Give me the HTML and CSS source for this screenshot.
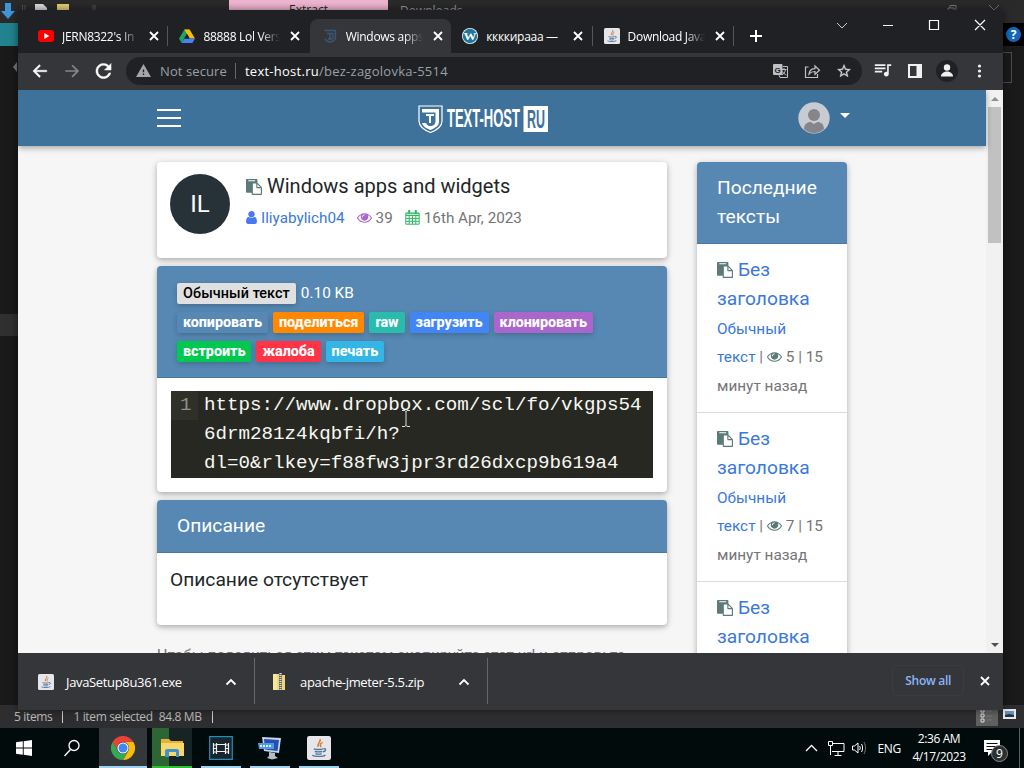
FILE: index.html
```html
<!DOCTYPE html>
<html lang="ru">
  <head>
    <meta charset="UTF-8">
    <title>Windows apps and widgets</title>
    <link rel="stylesheet" href="styles.css">
  </head>
  <body>
    <svg class="defs" width="0" height="0">
      <symbol id="paste" viewBox="0 0 1792 1792"><path d="M768 1664h896v-640h-416q-40 0-68-28t-28-68v-416h-384v1152zm256-1440v-64q0-13-9.5-22.5t-22.5-9.5h-704q-13 0-22.5 9.5t-9.5 22.5v64q0 13 9.5 22.5t22.5 9.5h704q13 0 22.5-9.5t9.5-22.5zm256 672h299l-299-299v299zm512 128v672q0 40-28 68t-68 28h-960q-40 0-68-28t-28-68v-160h-544q-40 0-68-28t-28-68v-1344q0-40 28-68t68-28h1088q40 0 68 28t28 68v328q21 13 36 28l408 408q28 28 48 76t20 88z"/></symbol>
      <symbol id="eye" viewBox="0 0 1792 1792"><path d="M1664 960q-152-236-381-353 61 104 61 225 0 185-131.5 316.5t-316.5 131.5-316.5-131.5-131.5-316.5q0-121 61-225-229 117-381 353 133 205 333.5 326.5t434.5 121.5 434.5-121.5 333.5-326.5zm-720-384q0-20-14-34t-34-14q-125 0-214.5 89.5t-89.5 214.5q0 20 14 34t34 14 34-14 14-34q0-86 61-147t147-61q20 0 34-14t14-34zm848 384q0 34-20 69-140 230-376.5 368.5t-499.5 138.5-499.5-139-376.5-368q-20-35-20-69t20-69q140-229 376.5-368t499.5-139 499.5 139 376.5 368q20 35 20 69z"/></symbol>
      <symbol id="user" viewBox="256 128 1280 1536"><path d="M1536 1399q0 109-62.5 187t-150.5 78h-854q-88 0-150.5-78t-62.5-187q0-85 8.5-160.5t31.5-152 58.5-131 94-89 134.5-34.5q131 128 313 128t313-128q76 0 134.5 34.5t94 89 58.5 131 31.5 152 8.5 160.5zm-256-887q0 159-112.5 271.5t-271.5 112.5-271.5-112.5-112.5-271.5 112.5-271.5 271.5-112.5 271.5 112.5 112.5 271.5z"/></symbol>
      <symbol id="close" viewBox="0 0 10 10"><path d="M1 1l8 8M9 1l-8 8" fill="none" stroke="currentColor" stroke-width="1.8"/></symbol>
      <symbol id="up" viewBox="0 0 12 8"><path d="M1.5 6.5L6 2l4.5 4.5" fill="none" stroke="currentColor" stroke-width="1.8"/></symbol>
      <symbol id="java" viewBox="0 0 16 16">
        <rect width="16" height="16" rx="1.5" fill="#e4e6ea"/>
        <path d="M8.7 2c1 2-2.4 3-1.2 5.2M10.4 4.2c-1.6.8-2 1.7-1 3.2" fill="none" stroke="#e0762f" stroke-width="1"/>
        <path d="M4.5 8.5c1 .7 5 .7 6.2 0M11 8.5c2-.4 1.8 1.7-.3 2M5.2 10.2c1 .5 4 .5 5 0M5.6 11.7c1 .4 3.200.4 4.200 0M3.500 12.800c1.500 1.200 7.500 1 8.800-.2" fill="none" stroke="#52759b" stroke-width=".9"/>
      </symbol>
    </svg>

    <div class="desktop">
      <!-- file explorer behind the browser -->
      <div class="explorer">
        <svg class="ribbon-icons" width="100" height="24" viewBox="0 0 100 24">
          <path d="M5 3h6v8h4l-7 8-7-8h4z" fill="#3d96dc"/>
          <path d="M22.500 5v5M25 5v5M93 5v5M95 5v5" stroke="#555"/>
          <path d="M35 4h8l4 4v2H35z" fill="#dcdcdc"/>
          <path d="M57 4h12v6H57z" fill="#e3ce74"/>
        </svg>
        <div class="ribbon-tab">Extract</div>
        <div class="folder-name">Downloads</div>
        <svg class="explorer-buttons" width="60" height="14" viewBox="0 0 60 14" fill="none" stroke="#777"><path d="M4 12V8h6v4M6 8V5.500h6V10M45 5l5 5 5-5"/></svg>
        <div class="file-tab"></div>
        <svg class="back-arrow" width="6" height="12" viewBox="0 0 6 12"><path d="M5 1L1 6l4 5z" fill="#777"/></svg>
        <div class="scroll-piece"></div>
        <div class="help"><span>?</span></div>
        <div class="search-box"></div>
        <div class="status">
          <span>5 items</span><i></i><span>1 item selected</span><span>84.8 MB</span><i></i>
          <svg class="views" width="44" height="18" viewBox="0 0 44 18">
            <rect x="0" y="0" width="22" height="18" fill="#606060"/>
            <path d="M5 1h3v3H5zM5 6h3v3H5zM5 11h3v3H5z" fill="none" stroke="#ddd"/>
            <path d="M10 3h6M10 8h6M10 12h6" stroke="#777"/>
            <rect x="27" y="1" width="13" height="10" fill="#e8e8e8"/><rect x="29" y="3" width="9" height="6" fill="#6a8fb5"/><path d="M29 7l4-1 5 1v2h-9z" fill="#234"/>
          </svg>
        </div>
      </div>

      <div class="browser">
        <div class="tabs">
          <div class="tab">
            <svg width="16" height="16" viewBox="0 0 16 16"><rect y="2" width="16" height="12" rx="3" fill="#f00"/><path d="M6.300 5l5 3-5 3z" fill="#fff"/></svg>
            <span>JERN8322's In</span>
            <svg class="x"><use href="#close"/></svg>
          </div>
          <div class="tab">
            <svg width="16" height="16" viewBox="0 0 16 16"><path d="M5.400 1.500h5.200L5.300 10.300 2.600 15 0 10.500z" fill="#1ea362"/><path d="M5.400 1.500h5.200l5.400 9h-5.300z" fill="#fbbc05"/><path d="M5.300 10.500H16L13.400 15H2.600z" fill="#4285f4"/><path d="M8 6l-2.600 4.500h5.200z" fill="#202124"/></svg>
            <span>88888 Lol Vers</span>
            <svg class="x"><use href="#close"/></svg>
          </div>
          <div class="tab active">
            <svg width="16" height="16" viewBox="0 0 16 16" fill="none" stroke="#3a5875" stroke-width="1.400"><path d="M2.500 2.500h11V9c0 3-2.500 4.500-5.500 5-3-.5-4.500-2-5-3.500M5 5.500h6M8 5.500v5M11 5v4c0 2-3 3-5 1.500"/></svg>
            <span>Windows apps</span>
            <svg class="x"><use href="#close"/></svg>
          </div>
          <div class="tab">
            <svg width="16" height="16" viewBox="0 0 16 16"><circle cx="8" cy="8" r="8" fill="#e8f3f7"/><circle cx="8" cy="8" r="7.200" fill="#21759b"/><text x="8" y="12" text-anchor="middle" textLength="13" lengthAdjust="spacingAndGlyphs" class="wp">W</text></svg>
            <span class="full">ккккирааа —</span>
            <svg class="x"><use href="#close"/></svg>
          </div>
          <div class="tab">
            <svg width="16" height="16"><use href="#java"/></svg>
            <span>Download Java</span>
            <svg class="x"><use href="#close"/></svg>
          </div>
          <svg class="new-tab" width="12" height="12" viewBox="0 0 12 12"><path d="M6 0v12M0 6h12" stroke="#fff" stroke-width="2"/></svg>
          <svg class="window-buttons" width="160" height="14" viewBox="0 0 160 14" fill="none" stroke="#fff"><path d="M7 5l5 5 5-5" stroke="#ccc"/><path d="M53 7.500h10M99.500 2.500h9v9h-9zM145 2l10 10M155 2l-10 10" stroke-width="1.200"/></svg>
        </div>

        <div class="toolbar">
          <svg class="nav" viewBox="0 0 24 24"><path d="M21 11H6.800l5.900-5.900L11 3.500 2.500 12l8.500 8.500 1.700-1.600L6.800 13H21z" stroke="#fff" stroke-width=".6" fill="#fff"/></svg>
          <svg class="nav" viewBox="0 0 24 24"><path d="M3 11h14.200l-5.900-5.900L13 3.500l8.500 8.500-8.500 8.500-1.700-1.600 5.900-5.900H3z" fill="#85868a"/></svg>
          <svg class="nav reload" viewBox="3 3 18 18"><path d="M17.650 6.350C16.200 4.900 14.210 4 12 4c-4.420 0-7.990 3.580-7.990 8s3.570 8 7.990 8c3.730 0 6.840-2.550 7.730-6h-2.080c-.82 2.330-3.040 4-5.650 4-3.310 0-6-2.690-6-6s2.690-6 6-6c1.660 0 3.140.69 4.220 1.780L13 11h7V4l-2.350 2.350z" fill="#fff" stroke="#fff" stroke-width=".5"/></svg>
          <div class="address">
            <svg width="15" height="15" viewBox="1 1 22 21"><path d="M1 21h22L12 2 1 21zm12-3h-2v-2h2v2zm0-4h-2v-4h2v4z" fill="#a5a6a9"/></svg>
            <span class="secure">Not secure</span>
            <span class="url"><b>text-host.ru</b>/bez-zagolovka-5514</span>
            <svg class="page-actions" width="80" height="18" viewBox="0 0 80 18">
              <rect x="1" y="2" width="9.500" height="11" rx="1" fill="#bfc0c3"/><text x="5.700" y="10.500" text-anchor="middle" class="gt">G</text>
              <path d="M11 4.500h4.500v11H8L7 13M9.500 7.500h5M12 6v1.500M13.500 7.500c-.5 3-2 4.500-3.500 5.500M10.500 9.500c1 2 2.500 3 4 3.500" fill="none" stroke="#bfc0c3"/>
              <path d="M36.500 5h-3v10.500h12V12M37 12c.5-3.500 3-5.300 6-5.300V4l4.500 4.300L43 12.300V9.500c-2.500 0-4.500.7-6 2.500z" fill="none" stroke="#bfc0c3" stroke-width="1.200"/>
              <path transform="translate(64 1) scale(.67)" d="M22 9.240l-7.190-.62L12 2 9.190 8.630 2 9.240l5.460 4.730L5.820 21 12 17.270 18.180 21l-1.630-7.030L22 9.240zM12 15.400l-3.760 2.270 1-4.280-3.320-2.880 4.380-.38L12 6.100l1.710 4.040 4.380.38-3.320 2.880 1 4.280L12 15.400z" fill="#d4d5d7" stroke="#d4d5d7" stroke-width=".4"/>
            </svg>
          </div>
          <svg class="tools" width="120" height="24" viewBox="0 0 120 24" fill="#f1f1f1">
            <path transform="translate(3 2) scale(.82)" d="M14 4H1v2h13V4zm0 4H1v2h13V8zM1 14h9v-2H1v2zM16 4v9.200c-.3-.1-.7-.2-1-.2-1.700 0-3 1.300-3 3s1.300 3 3 3 3-1.300 3-3V6h3V4h-5z"/>
            <path d="M37 5h14v14H37zM39 7v10h6.500V7z" fill-rule="evenodd"/>
            <circle cx="76" cy="12" r="11" fill="#202124"/><circle cx="76" cy="8.500" r="3.200"/><path d="M70 17.500c0-3.500 3.500-5 6-5s6 1.500 6 5z"/>
            <circle cx="108.500" cy="7" r="1.600"/><circle cx="108.500" cy="12" r="1.600"/><circle cx="108.500" cy="17" r="1.600"/>
          </svg>
        </div>

        <div class="viewport">
          <div class="page">
            <div class="navbar">
              <svg width="24" height="20" viewBox="0 0 24 20"><path d="M0 2h24M0 10h24M0 18h24" stroke="#fff" stroke-width="1.800"/></svg>
              <svg class="logo" width="131" height="30" viewBox="0 0 131 30">
                <path d="M1 2h23v15c0 6-5 9-11.500 11.500C6 26 1 23 1 17z" fill="none" stroke="#fff" stroke-width="1.200"/>
                <path d="M4 5h17v12.500c0 4.500-4 6.500-8.500 8.500C9 24.500 5 23 4 19h4c1 2.500 3 3 4.500 3 3 0 5-2 5-5V8.500H4z" fill="#fff"/>
                <path d="M8 11h8M12 11v8" stroke="#fff" stroke-width="2"/>
                <text x="29" y="23" textLength="73" lengthAdjust="spacingAndGlyphs">TEXT-HOST</text>
                <path d="M105.500 2H130v26h-24.500z" fill="#fff"/>
                <text class="ru" x="109" y="23.500" textLength="18" lengthAdjust="spacingAndGlyphs">RU</text>
              </svg>
              <div class="account">
                <svg width="32" height="32" viewBox="0 0 32 32"><circle cx="16" cy="16" r="15.700" fill="#c8cbd2"/><circle cx="16" cy="13" r="6" fill="#85868c"/><path d="M6 27c.3-5 3-7 6.500-7l3.500 2 3.500-2c3.500 0 6.200 2 6.500 7-5 5.500-15 5.500-20 0z" fill="#85868c"/></svg>
                <i class="caret"></i>
              </div>
            </div>

            <div class="content">
              <div class="main">
                <div class="card info">
                  <div class="avatar">IL</div>
                  <div>
                    <h1><svg class="paste"><use href="#paste"/></svg>Windows apps and widgets</h1>
                    <div class="meta">
                      <a><svg class="user"><use href="#user"/></svg>Iliyabylich04</a>
                      <span><svg class="eye"><use href="#eye"/></svg>39</span>
                      <span><svg class="cal" viewBox="0 0 15 15" fill="none" stroke="#2fb765"><path d="M.8 3h13.400v11.200H.8zM.8 5.500h13.400M.8 8.400h13.400M.8 11.300h13.400M4.200 5v9M7.500 5v9M10.800 5v9M1 3.800h13"/><path d="M4.200 0v3.500M10.800 0v3.500" stroke-width="2"/></svg>16th Apr, 2023</span>
                    </div>
                  </div>
                </div>

                <div class="card text">
                  <div class="card-header">
                    <div class="line"><span class="badge light">Обычный текст</span> <span class="size">0.10 KB</span></div>
                    <div class="line">
                      <span class="badge copy">копировать</span>
                      <span class="badge share">поделиться</span>
                      <span class="badge raw">raw</span>
                      <span class="badge download">загрузить</span>
                      <span class="badge clone">клонировать</span>
                    </div>
                    <div class="line">
                      <span class="badge embed">встроить</span>
                      <span class="badge report">жалоба</span>
                      <span class="badge print">печать</span>
                    </div>
                  </div>
                  <div class="code">
                    <div class="gutter">1</div>
                    <div class="source">https://www.dropbox.com/scl/fo/vkgps54<br>6drm281z4kqbfi/h?<br>dl=0&amp;rlkey=f88fw3jpr3rd26dxcp9b619a4</div>
                  </div>
                </div>

                <div class="card description">
                  <div class="card-header">Описание</div>
                  <p>Описание отсутствует</p>
                </div>
                <p class="hint">Чтобы поделиться этим текстом скопируйте этот url и отправьте</p>
              </div>

              <div class="card sidebar">
                <div class="card-header">Последние тексты</div>
                <div class="item">
                  <a><svg class="paste"><use href="#paste"/></svg>Без<br>заголовка</a>
                  <small><a>Обычный<br>текст</a> | <svg class="eye"><use href="#eye"/></svg> 5 | 15<br>минут назад</small>
                </div>
                <div class="item">
                  <a><svg class="paste"><use href="#paste"/></svg>Без<br>заголовка</a>
                  <small><a>Обычный<br>текст</a> | <svg class="eye"><use href="#eye"/></svg> 7 | 15<br>минут назад</small>
                </div>
                <div class="item">
                  <a><svg class="paste"><use href="#paste"/></svg>Без<br>заголовка</a>
                </div>
              </div>
            </div>
          </div>
          <div class="scrollbar"><i class="arrow-up"></i><div class="thumb"></div><i class="arrow-down"></i></div>
        </div>

        <div class="downloads">
          <div class="file">
            <svg width="16" height="16"><use href="#java"/></svg>
            <span>JavaSetup8u361.exe</span>
            <svg class="up"><use href="#up"/></svg>
          </div>
          <div class="file zip">
            <svg width="16" height="17" viewBox="0 0 16 17"><path d="M1 1h6l1 1h5v15H1z" fill="#f0d775"/><path d="M1 1h4v16H1z" fill="#f7e79a"/><path d="M7 0h3v17H7z" fill="#666"/><path d="M8.500 0v17" stroke="#ddd" stroke-width="2" stroke-dasharray="1 1"/></svg>
            <span>apache-jmeter-5.5.zip</span>
            <svg class="up"><use href="#up"/></svg>
          </div>
          <span class="show-all">Show all</span>
          <svg class="x"><use href="#close"/></svg>
        </div>
      </div>

      <div class="taskbar">
        <div class="button"><svg width="16" height="16" viewBox="0 0 16 16"><path d="M0 2.300L6.800 1.300v6.300H0zM7.700 1.200L16 0v7.600H7.700zM0 8.400h6.800v6.300L0 13.700zM7.700 8.400H16V16l-8.300-1.200z" fill="#fff"/></svg></div>
        <div class="button search"><svg width="18" height="18" viewBox="0 0 18 18"><circle cx="11" cy="6.500" r="5" fill="none" stroke="#fff" stroke-width="1.300"/><path d="M7.500 10.500L1.500 17" stroke="#fff" stroke-width="1.300"/></svg></div>
        <div class="button app current">
          <svg width="24" height="24" viewBox="0 0 24 24"><path d="M1.600 6A12 12 0 0 1 22.400 6H12a6 6 0 0 0-5.200 9z" fill="#ea4335"/><path d="M22.400 6A12 12 0 0 1 12 24l5.200-9A6 6 0 0 0 12 6z" fill="#fbbc05"/><path d="M12 24A12 12 0 0 1 1.600 6l5.200 9a6 6 0 0 0 10.400 0z" fill="#34a853"/><circle cx="12" cy="12" r="5.600" fill="#fff"/><circle cx="12" cy="12" r="4.500" fill="#4285f4"/></svg>
        </div>
        <div class="button app files">
          <svg width="23" height="20" viewBox="0 0 23 20"><path d="M0 1h8l2 2h12v15H0z" fill="#e5b13a"/><path d="M0 5h23v13H0z" fill="#fbd66b"/><path d="M4 19v-6c0-1 1-2 2-2h10c1 0 2 1 2 2v6h-3v-5H8v5z" fill="#3d94cf"/></svg>
        </div>
        <div class="button app">
          <svg width="24" height="24" viewBox="0 0 24 24"><path d="M.7.700h22.600v22.600H.7z" fill="#19252c" stroke="#238dbb" stroke-width="1.200"/><path d="M4.500 7v11M7.500 7v11M16.500 7v11M19.500 7v11M7 8.500h10M7 15.500h10" fill="none" stroke="#eee" stroke-width="1.200"/><path d="M4 9h3M4 12.500h3M4 16h3M17 9h3M17 12.500h3M17 16h3" stroke="#eee"/></svg>
        </div>
        <div class="button app">
          <svg width="24" height="24" viewBox="0 0 24 24"><path d="M4 1l19 1-2 15-15-2z" fill="#c9d4e6"/><path d="M6 3l15 1-1.500 11L7 13.500z" fill="#2450b4"/><path d="M0 7h16v6H1z" fill="#4d9be0"/><path d="M2 10h12" stroke="#dceafa" stroke-width="2" stroke-dasharray="2 1"/><path d="M11 16l6 1v3l3 2-6 1.500-5-1.500 2-2z" fill="#b6bcc7"/></svg>
        </div>
        <div class="button app"><svg width="24" height="24"><use href="#java"/></svg></div>
        <div class="tray">
          <svg width="58" height="18" viewBox="0 0 58 18" fill="none" stroke="#fff"><path d="M1 12l5.500-5.500L12 12" stroke-width="1.300"/><path d="M28 4.500h11v8H27M33 13v3M29.500 16.500h7M23.500 2.500h4v4h-4zM25.500 7v9" /><path d="M47.500 7v4h2l3.500 3V4l-3.500 3zM54.500 7c1 1.500 1 2.500 0 4M56.500 5c1.500 2.500 1.500 5.500 0 8" /></svg>
          <svg class="wave" width="5" height="18" viewBox="0 0 5 18"><path d="M1 3c2 4 2 8 0 12" fill="none" stroke="#777"/></svg>
          <span class="lang">ENG</span>
          <div class="clock">2:36 AM<br>4/17/2023</div>
          <div class="notes">
            <svg width="18" height="18" viewBox="0 0 18 18"><path d="M1 1h16v12H9l-4 4v-4H1z" fill="#fff"/><path d="M3.500 4.500h11M3.500 7.500h11M3.500 10.500h7" stroke="#081010"/></svg>
            <span>9</span>
          </div>
        </div>
      </div>
      <svg class="cursor" width="8" height="17" viewBox="0 0 8 17"><path d="M0 .5h3l1 1 1-1h3M4 1v15M0 16.500h3l1-1 1 1h3" fill="none" stroke="#ddd"/></svg>
    </div>
  </body>
</html>
```
FILE: styles.css
```css
* {
  box-sizing: border-box;
}
body {
  margin: 0;
  font-family: "Open Sans", "Noto Sans", sans-serif;
  font-size: 12px;
}
h1, p {
  margin: 0;
  font-weight: normal;
}
.defs {
  position: absolute;
}
.desktop {
  position: relative;
  width: 1024px;
  height: 768px;
  overflow: hidden;
  background: #1a1a1b;
}

/* explorer window */
.explorer {
  position: absolute;
  top: 0;
  left: 0;
  width: 1024px;
  height: 728px;
  background: linear-gradient(#2a2a2b 23px, #1a1a1a 23px);
}
.explorer > * {
  position: absolute;
}
.ribbon-icons {
  top: 0;
  left: 0;
}
.ribbon-tab {
  left: 229px;
  width: 159px;
  height: 20px;
  padding-top: 2px;
  background: #efb5d0;
  color: #222;
  line-height: 16px;
  text-align: center;
}
.folder-name {
  top: 3px;
  left: 400px;
  color: #999;
  line-height: 16px;
}
.explorer-buttons {
  left: 944px;
  top: 0;
}
.file-tab {
  top: 23px;
  width: 18px;
  height: 23px;
  background: #20838f;
}
.back-arrow {
  top: 61px;
  left: 12px;
}
.scroll-piece {
  top: 314px;
  width: 18px;
  height: 22px;
  background: #303030;
}
.help {
  top: 23px;
  left: 1003px;
  width: 21px;
  height: 23px;
  padding: 4px 3px;
  background: #000;
}
.help span {
  display: block;
  width: 15px;
  height: 15px;
  border-radius: 50%;
  background: #1467b8;
  color: #fff;
  font-weight: bold;
  line-height: 15px;
  text-align: center;
}
.search-box {
  top: 52px;
  left: 990px;
  width: 22px;
  height: 31px;
  border: 1px solid #4c4c4c;
}
.status {
  display: flex;
  align-items: center;
  bottom: 0;
  width: 1024px;
  height: 23px;
  padding: 0 0 0 14px;
  background: #2e2e30;
  color: #bdbdbd;
  letter-spacing: -.35px;
}
.status i {
  width: 1px;
  height: 12px;
  margin: 0 10px;
  background: #ccc;
}
.status span + span {
  margin-left: 6px;
}
.views {
  margin-left: auto;
  margin-right: 4px;
}

/* browser window */
.browser {
  position: absolute;
  top: 10px;
  left: 18px;
  display: flex;
  flex-direction: column;
  width: 985px;
  height: 700px;
  background: #35363a;
  color: #fff;
  box-shadow: 0 0 8px #0008;
}
.tabs {
  display: flex;
  height: 43px;
  padding: 9px 13px 0 9px;
  background: #202124;
}
.tab {
  display: flex;
  flex: 0 0 141.400px;
  align-items: center;
  height: 34px;
  padding-left: 11px;
  border-radius: 8px 8px 0 0;
  background: linear-gradient(#55565a, #55565a) right center / 1px 20px no-repeat;
}
.tab:nth-child(2) {
  background: none;
}
.tab.active {
  padding-left: 12px;
  background: #35363a;
}
.tab span {
  width: 77px;
  margin: 0 10px 0 8px;
  overflow: hidden;
  white-space: nowrap;
  letter-spacing: -.3px;
  -webkit-mask-image: linear-gradient(90deg, #000 75%, transparent);
  mask-image: linear-gradient(90deg, #000 75%, transparent);
}
.tab .full {
  -webkit-mask-image: none;
  mask-image: none;
}
.x {
  flex: none;
  width: 10px;
  height: 10px;
}
.tab > svg {
  flex: none;
}
.wp {
  fill: #fff;
  font: bold 11px "Liberation Serif", serif;
}
.new-tab {
  margin: 11px 0 0 16px;
}
.window-buttons {
  margin: -1px 0 0 auto;
}
.toolbar {
  display: flex;
  align-items: center;
  height: 37px;
  padding: 0 6px 2px 13px;
}
.nav {
  width: 18px;
  height: 18px;
  margin-right: 14px;
}
.reload {
  width: 17px;
  margin-right: 14px;
}
.address {
  display: flex;
  align-items: center;
  width: 736px;
  height: 28px;
  padding: 0 10px 0 10px;
  border-radius: 14px;
  background: #202124;
  color: #9aa0a6;
  font-size: 13px;
}
.secure {
  margin-left: 9px;
  letter-spacing: .1px;
}
.url {
  margin-left: 8px;
  padding-left: 9px;
  border-left: 1px solid #66676b;
  line-height: 16px;
  letter-spacing: .26px;
}
.url b {
  color: #fff;
  font-weight: normal;
}
.page-actions {
  margin-left: auto;
}
.gt {
  fill: #202124;
  font: bold 8px "Liberation Sans", sans-serif;
}
.tools {
  margin-left: 9px;
}

/* text-host page */
.viewport {
  display: flex;
  height: 563px;
  overflow: hidden;
  background: #f6f6f6;
}
.page {
  width: 968px;
  color: #212529;
  font: 400 19.200px/28.800px Roboto, sans-serif;
}
.navbar {
  position: relative;
  display: flex;
  align-items: center;
  justify-content: space-between;
  height: 56px;
  padding: 0 136px 0 139px;
  background: #3f729b;
  box-shadow: 0 2px 6px #0005;
}
.logo {
  margin: 2px 0 0 -13px;
}
.logo text {
  fill: #fff;
  font: bold 25px "Liberation Sans", sans-serif;
}
.logo .ru {
  fill: #3f729b;
}
.account {
  display: flex;
  align-items: center;
}
.caret {
  margin: -5px 0 0 10px;
  border: 5px solid transparent;
  border-top-color: #fff;
  border-bottom: 0;
}
.content {
  display: flex;
  gap: 30px;
  padding: 16px 0 0 139px;
}
.main {
  width: 510px;
}
.card {
  margin-bottom: 8px;
  border-radius: 4px;
  background: #fff;
  box-shadow: 0 2px 5px #0003, 0 2px 8px #0002;
}
.card-header {
  padding: 12px 20px 11px;
  border-bottom: 1px solid #4779a5;
  border-radius: 4px 4px 0 0;
  background: #5688b3;
  color: #fff;
}
.info {
  display: flex;
  gap: 16px;
  height: 96px;
  padding: 12px 13px;
}
.avatar {
  width: 60px;
  height: 60px;
  border-radius: 50%;
  background: #263238;
  color: #fff;
  font-size: 24px;
  line-height: 61px;
  text-align: center;
}
h1 {
  font-size: 20px;
  line-height: 25px;
}
.paste {
  width: 16px;
  height: 16px;
  margin-right: 5px;
  vertical-align: -2px;
  fill: #5c7b78;
}
.meta {
  display: flex;
  gap: 12px;
  margin-top: 5px;
  color: #757575;
  font-size: 15.250px;
}
.meta svg {
  margin-right: 4px;
  vertical-align: -2px;
}
.meta .user {
  width: 11px;
  height: 13px;
  fill: #4a78f0;
  vertical-align: -1px;
}
.eye {
  width: 15px;
  height: 15px;
  fill: #5c7b78;
  vertical-align: -2px;
}
.meta .eye {
  fill: #aa66cc;
}
.cal {
  width: 15px;
  height: 15px;
}
.page a {
  color: #3a78dd;
}
.text {
  height: 226px;
}
.text .card-header {
  height: 112px;
  padding-top: 13px;
}
.line {
  display: flex;
  gap: 5px;
  align-items: center;
  height: 29px;
}
.badge {
  height: 21px;
  padding: 0 6px;
  border-radius: 2px;
  box-shadow: 0 2px 5px #0003;
  color: #fff;
  font-size: 14.400px;
  font-weight: 800;
  line-height: 22px;
  letter-spacing: -.06px;
}
.light {
  background: #e0e0e0;
  color: #000;
  font-weight: 500;
  letter-spacing: .07px;
}
.size {
  font-size: 15.360px;
}
.copy { background: #5688b3; }
.share { background: #ff8800; }
.raw { background: #2bbbad; }
.download { background: #4285f4; }
.clone { background: #aa66cc; }
.embed { background: #00c851; }
.report { background: #ff3547; }
.print { background: #33b5e5; }
.code {
  display: flex;
  height: 87px;
  margin: 13px 14px 0;
  background: #272822;
  color: #f8f8f2;
  font: 19.200px/29px "Liberation Mono", monospace;
}
.gutter {
  width: 27px;
  height: 29px;
  padding-left: 9px;
  background: #2f3129;
  color: #8f908a;
}
.source {
  margin-left: 6px;
  white-space: nowrap;
}
.description {
  height: 125px;
}
.description p {
  padding: 13px;
}
.hint {
  margin-top: 16px;
  color: #757575;
  font-size: 15.360px;
  white-space: nowrap;
}
.sidebar {
  width: 150px;
  height: 600px;
}
.sidebar .card-header {
  height: 82px;
  line-height: 28.500px;
}
.item {
  height: 169px;
  padding: 12px 20px;
  border-bottom: 1px solid #dcdcdc;
  white-space: nowrap;
}
.item small {
  display: block;
  padding-top: 1px;
  color: #757575;
  font-size: 15.360px;
}
.scrollbar {
  display: flex;
  flex-direction: column;
  align-items: center;
  width: 17px;
  height: 563px;
  padding: 7px 0 6px;
  background: #f1f1f1;
}
.arrow-up, .arrow-down {
  border: 4px solid transparent;
  border-bottom-color: #909090;
  border-top: 0;
}
.arrow-down {
  margin-top: auto;
  border-top: 4px solid #505050;
  border-bottom: 0;
}
.thumb {
  width: 13px;
  height: 136px;
  margin-top: 6px;
  background: #c1c1c1;
}

/* downloads bar */
.downloads {
  display: flex;
  align-items: center;
  height: 57px;
  padding: 0 13px 2px 0;
}
.file {
  display: flex;
  align-items: center;
  width: 237px;
  height: 46px;
  padding: 2px 17px 0 20px;
  border-right: 1px solid #66676b;
  font-size: 13px;
  letter-spacing: -.34px;
}
.file span {
  margin-left: 12px;
}
.zip {
  width: 233px;
  padding-left: 17px;
}
.up {
  width: 12px;
  height: 8px;
  margin-left: auto;
}
.show-all {
  margin-left: auto;
  margin-right: 16px;
  padding: 6px 12px;
  border: 1px solid #3b3c40;
  border-radius: 4px;
  color: #8ab4f8;
  font-weight: 600;
  letter-spacing: -.3px;
}

/* taskbar */
.taskbar {
  position: absolute;
  top: 728px;
  left: 0;
  display: flex;
  width: 1024px;
  height: 40px;
  background: #020b0b;
  color: #fff;
}
.button {
  display: flex;
  align-items: center;
  justify-content: center;
  width: 48px;
}
.search {
  margin-right: 3px;
}
.app {
  width: 40px;
  margin-right: 9px;
  padding-top: 2px;
  border-bottom: 2px solid #9cd3ee;
}
.current {
  width: 48px;
  margin-right: 5px;
  background: #34383b;
}
.files {
  border-color: #2ec12e;
  background: linear-gradient(90deg, #2d6534 17px, #172425 17px);
}
.tray {
  display: flex;
  align-items: center;
  margin-left: auto;
  margin-right: 4px;
  padding-right: 18px;
  border-right: 1px solid #5b6262;
}
.lang {
  margin-left: 9px;
  letter-spacing: -.3px;
}
.clock {
  width: 60px;
  margin-left: 8px;
  line-height: 18px;
  letter-spacing: -.4px;
  text-align: center;
}
.notes {
  position: relative;
  height: 18px;
  margin-left: 14px;
}
.notes span {
  position: absolute;
  top: 6px;
  left: 8px;
  width: 17px;
  height: 17px;
  border: 1px solid #888;
  border-radius: 50%;
  background: #2b3131;
  font-size: 12px;
  line-height: 15px;
  text-align: center;
}
.cursor {
  position: absolute;
  top: 410px;
  left: 402px;
}
```
